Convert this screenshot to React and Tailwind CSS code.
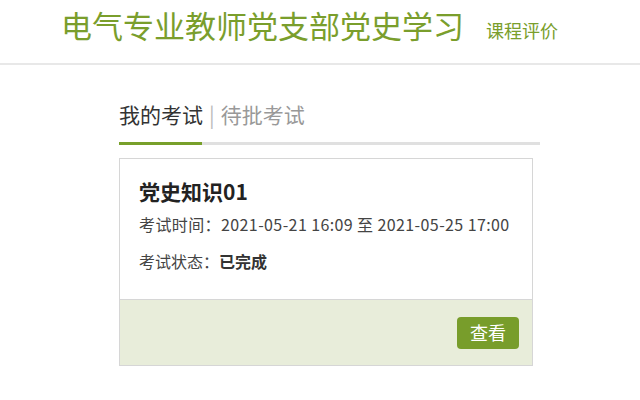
import React from 'react';

const exam = {
  title: '党史知识01',
  start: '2021-05-21 16:09',
  end: '2021-05-25 17:00',
  status: '已完成',
};

function ExamCard({ item }) {
  return (
    <div className="w-[414px] border border-[#d6d6d6] bg-white">
      <div className="h-[141px] border-b border-[#d6d6d6] px-[19px] pt-[18px]">
        <h3 className="text-[21px] leading-[28px] font-bold text-[#222]">{item.title}</h3>
        <p className="mt-[9px] text-[16px] leading-[20px] tracking-[0.4px] text-[#444]">
          考试时间：{item.start} 至 {item.end}
        </p>
        <p className="mt-[17px] text-[16px] leading-[20px] text-[#444]">
          考试状态：<span className="font-bold text-[#333]">{item.status}</span>
        </p>
      </div>
      <div className="flex h-[65px] items-center justify-end bg-[#e8edda] pr-[13px]">
        <button className="h-[32px] w-[62px] rounded-[4px] bg-[#789d2b] text-[18px] text-white">查看</button>
      </div>
    </div>
  );
}

export default function App() {
  return (
    <div className="h-[400px] w-[640px] bg-white font-['Noto_Sans_CJK_SC','Liberation_Sans',sans-serif]">
      <div className="flex h-[65px] items-baseline border-b-2 border-[#e8e8e8] pl-[61px] pt-[5px]">
        <h1 className="text-[31px] leading-[40px] text-[#7a9e2c]">电气专业教师党支部党史学习</h1>
        <span className="ml-[22px] text-[18px] text-[#7a9e2c]">课程评价</span>
      </div>
      <div className="pl-[119px] pt-[35px]">
        <div className="flex items-center text-[21px] leading-[28px]">
          <span className="text-[#333]">我的考试</span>
          <span className="mx-[6px] text-[#bbb]">|</span>
          <span className="text-[#999]">待批考试</span>
        </div>
        <div className="mt-[14px] h-[3px] w-[421px] bg-[#e0e0e0]">
          <div className="h-[3px] w-[83px] bg-[#78a02a]" />
        </div>
        <div className="mt-[13px]">
          <ExamCard item={exam} />
        </div>
      </div>
    </div>
  );
}
